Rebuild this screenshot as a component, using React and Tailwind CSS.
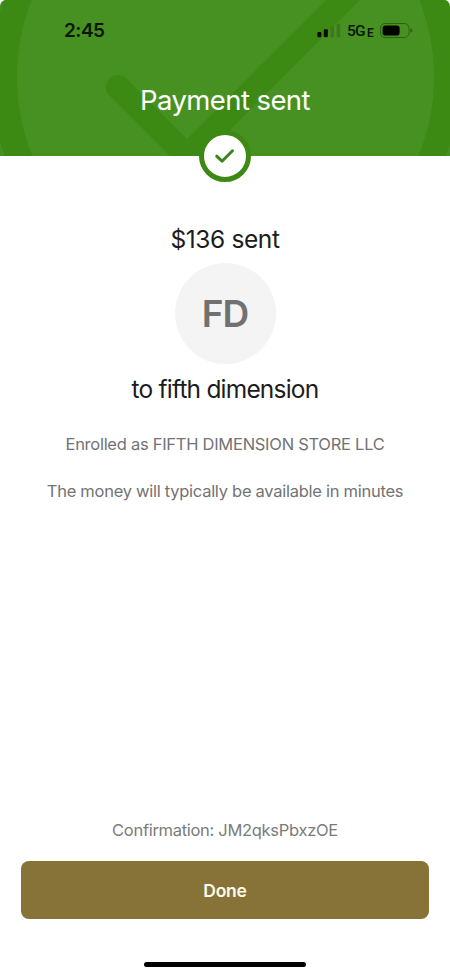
import React from "react";

const StatusBar = () => {
  return (
    <div className="relative flex h-[62px] items-center justify-between pl-16 pr-[37px] text-[#091604]">
      <span className="text-[19px] leading-6 font-semibold tracking-[-0.5px]">2:45</span>
      <div className="flex items-center">
        <svg className="mr-1.5" width="24" height="16" viewBox="0 0 24 16">
          <rect x="0.4" y="9" width="4" height="5.2" rx="1" fill="#050b02" />
          <rect x="6.8" y="6.2" width="4" height="8" rx="1" fill="#050b02" />
          <rect x="13.4" y="3.2" width="3.6" height="11" rx="1" fill="#3b7a1c" />
          <rect x="19.6" y="0.7" width="3.6" height="13.5" rx="1" fill="#3b7a1c" />
        </svg>
        <span className="w-[18px] font-['Roboto',sans-serif] text-[15.5px] leading-4 font-medium tracking-[-0.8px]">
          5G
        </span>
        <span className="mt-[3px] ml-0.5 w-[7px] font-['Roboto',sans-serif] text-[12px] leading-4 font-semibold">
          E
        </span>
        <svg className="ml-1.5" width="33" height="16" viewBox="0 0 33 16">
          <rect x="0.5" y="0.5" width="28.5" height="14" rx="4.5" fill="none" stroke="#2c6211" />
          <rect x="2.6" y="2.5" width="17" height="10" rx="2.8" fill="#020500" />
          <path d="M30.3 5.2c1.6.5 2.1 1.3 2.1 2.3s-.5 1.8-2.1 2.3z" fill="#2c6211" />
        </svg>
      </div>
    </div>
  );
};

const Header = () => {
  return (
    <header className="relative h-[156px] rounded-t-md bg-[#479123]">
      {/* oversized checkmark behind the title */}
      <svg
        className="absolute inset-0 rounded-t-md"
        width="450"
        height="156"
        viewBox="0 0 450 156"
        fill="none"
        stroke="#3c8913"
      >
        <circle cx="225.5" cy="77" r="221.5" strokeWidth="26" />
        <path d="M118 87L187 156L363 -20" strokeWidth="24" strokeLinecap="round" />
      </svg>
      <StatusBar />
      <h1 className="relative mt-5 text-center text-[27.5px] leading-9 tracking-[-0.6px] text-white">
        Payment sent
      </h1>
      <div className="absolute -bottom-[26px] left-[199px] flex size-[52px] items-center justify-center rounded-full border-[5px] border-[#3c8913] bg-white">
        <svg width="24" height="20" viewBox="0 0 24 20" fill="none">
          <path
            d="M3.7 10.2L9 15.2L19.5 4.8"
            stroke="#3c8420"
            strokeWidth="3"
            strokeLinecap="round"
            strokeLinejoin="round"
          />
        </svg>
      </div>
    </header>
  );
};

const App = () => {
  return (
    <div className="flex h-[976px] w-[450px] flex-col overflow-hidden bg-white font-['Inter',sans-serif]">
      <Header />
      <main className="flex flex-1 flex-col items-center pt-[67px] whitespace-nowrap">
        <p className="text-[24.5px] leading-8 tracking-[-0.4px] text-[#1c1c1c]">$136 sent</p>
        <div className="mt-2 flex size-[101px] items-center justify-center rounded-full bg-[#f4f4f4] text-[37px] font-semibold tracking-[-1px] text-[#717171]">
          FD
        </div>
        <p className="mt-[9px] text-[24.5px] leading-8 tracking-[-0.8px] text-[#1c1c1c]">
          to fifth dimension
        </p>
        <p className="mt-[27px] text-[16.5px] leading-6 tracking-[-0.27px] text-[#737373]">
          Enrolled as FIFTH DIMENSION STORE LLC
        </p>
        <p className="mt-[23px] text-[16.5px] leading-6 tracking-[-0.27px] text-[#737373]">
          The money will typically be available in minutes
        </p>
      </main>
      <footer className="flex flex-col items-center px-[21px]">
        <p className="text-[16.5px] leading-6 tracking-[-0.3px] text-[#7b7b7b]">
          Confirmation: JM2qksPbxzOE
        </p>
        <button className="mt-[19px] h-[58px] w-full rounded-lg bg-[#877337] pt-0.5 text-[17.5px] font-semibold tracking-[-0.2px] text-[#fffbe8]">
          Done
        </button>
        <div className="mt-[43px] mb-[9px] h-[5px] w-[162px] rounded-full bg-black" />
      </footer>
    </div>
  );
};

export default App;
